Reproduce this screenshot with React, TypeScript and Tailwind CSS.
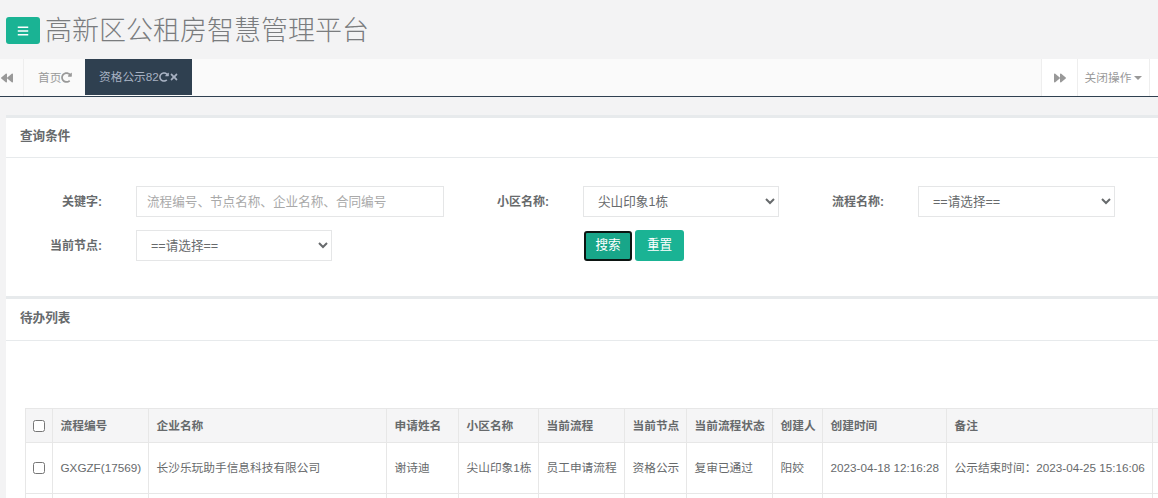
import { FaBackward, FaForward, FaBars, FaRedoAlt, FaTimes } from "react-icons/fa";

const font = { fontFamily: '"Liberation Sans", "Noto Sans CJK SC", sans-serif' };

const cols = [27, 96, 238, 72, 80, 86, 62, 86, 50, 124, 206, 60];

const heads = ["流程编号", "企业名称", "申请姓名", "小区名称", "当前流程", "当前节点", "当前流程状态", "创建人", "创建时间", "备注", ""];
const cells = ["GXGZF(17569)", "长沙乐玩助手信息科技有限公司", "谢诗迪", "尖山印象1栋", "员工申请流程", "资格公示", "复审已通过", "阳姣", "2023-04-18 12:16:28", "公示结束时间：2023-04-25 15:16:06", ""];

function Label({ children }: { children: string }) {
  return <label className="w-[96px] shrink-0 text-right text-[12px] font-bold text-[#676a6c]">{children}</label>;
}

function Select({ value, w }: { value: string; w: string }) {
  return (
    <select
      defaultValue={value}
      className={`${w} ml-[34px] h-[31px] border border-[#e5e6e7] bg-white pl-[10px] pr-[8px] text-[12.6px] text-[#676a6c] appearance-auto`}
    >
      <option>{value}</option>
    </select>
  );
}

export default function App() {
  return (
    <div className="h-[498px] w-[1158px] overflow-hidden bg-[#f3f3f4] text-[11.7px] text-[#676a6c]" style={font}>
      <header className="flex h-[59px] items-center pl-[6px] pt-[2px]">
        <button className="flex h-[27px] w-[34px] items-center justify-center rounded-[3px] bg-[#1ab394] text-white">
          <FaBars className="h-[12px] w-[12px]" />
        </button>
        <h1 className="ml-[5px] text-[27px] font-light leading-[30px] text-[#7a7c7e]">高新区公租房智慧管理平台</h1>
      </header>

      <nav className="flex h-[38px] border-b border-[#2f4050] bg-[#fafafa]">
        <div className="flex w-[24px] items-center border-r border-[#eeeeee] pl-[1px] text-[#999999]">
          <FaBackward className="h-[12px] w-[12px]" />
        </div>
        <div className="flex w-[61px] items-center pl-[14px] text-[11.7px] text-[#999999]">
          首页<FaRedoAlt className="h-[11px] w-[11px]" />
        </div>
        <div className="flex h-[36px] w-[107px] items-center bg-[#2f4050] pl-[14px] text-[11.7px] text-[#a7b1c2]">
          资格公示82<FaRedoAlt className="h-[10px] w-[10px]" /><FaTimes className="h-[10px] w-[10px]" />
        </div>
        <div className="flex-1" />
        <div className="flex w-[36px] items-center justify-center border-l border-[#eeeeee] bg-white text-[#999999]">
          <FaForward className="h-[12px] w-[12px]" />
        </div>
        <div className="flex w-[73px] items-center justify-center gap-[3px] border-l border-r border-[#eeeeee] bg-white text-[11.7px] text-[#999999]">
          关闭操作
          <span className="mt-[1px] h-0 w-0 border-x-[4px] border-t-[4px] border-x-transparent border-t-[#999999]" />
        </div>
        <div className="w-[8px] bg-white" />
      </nav>

      <main className="ml-[6px] mt-[18px] bg-white">
        <section className="border-t-[3px] border-[#e7eaec]">
          <div className="flex h-[40px] items-center border-b border-[#e7eaec] pb-[2px] pl-[14px] text-[12.6px] font-bold">查询条件</div>
          <div className="h-[138px] pt-[28px]">
            <div className="grid grid-cols-[447px_335px_1fr] gap-y-[13px]">
              <div className="flex items-center">
                <Label>关键字:</Label>
                <input
                  placeholder="流程编号、节点名称、企业名称、合同编号"
                  className="ml-[34px] h-[31px] w-[308px] border border-[#e5e6e7] bg-white px-[10px] text-[12.6px] outline-none placeholder:text-[#a9a9a9]"
                />
              </div>
              <div className="flex items-center">
                <Label>小区名称:</Label>
                <Select value="尖山印象1栋" w="w-[196px]" />
              </div>
              <div className="flex items-center">
                <Label>流程名称:</Label>
                <Select value="==请选择==" w="w-[197px]" />
              </div>
              <div className="flex items-center">
                <Label>当前节点:</Label>
                <Select value="==请选择==" w="w-[196px]" />
              </div>
              <div className="flex items-center pl-[131px]">
                <button className="h-[30px] w-[48px] rounded-[3px] border-2 border-[#0c1512] bg-[#18a689] text-[12.6px] text-white">搜索</button>
                <button className="ml-[3px] h-[31px] w-[49px] rounded-[3px] bg-[#1ab394] text-[12.6px] text-white">重置</button>
              </div>
            </div>
          </div>
        </section>

        <section className="border-t-[3px] border-[#e7eaec]">
          <div className="flex h-[42px] items-center border-b border-[#e7eaec] pb-[2px] pl-[14px] text-[12.6px] font-bold">待办列表</div>
          <div className="pl-[19px] pt-[67px]">
            <table className="w-[1187px] table-fixed border-collapse border border-[#e7e7e7]">
              <colgroup>
                {cols.map((c, i) => (
                  <col key={i} style={{ width: c }} />
                ))}
              </colgroup>
              <thead>
                <tr className="h-[34px] bg-[#f5f5f6]">
                  <th className="border border-[#e7e7e7] text-center align-middle">
                    <input type="checkbox" className="mx-auto block h-[12px] w-[12px]" />
                  </th>
                  {heads.map((h, i) => (
                    <th key={i} className="whitespace-nowrap border border-[#e7e7e7] pl-[7.5px] pr-[8px] text-left text-[11.7px] font-bold">{h}</th>
                  ))}
                </tr>
              </thead>
              <tbody>
                <tr className="h-[51px]">
                  <td className="border border-[#e7e7e7] text-center align-middle">
                    <input type="checkbox" className="mx-auto block h-[12px] w-[12px]" />
                  </td>
                  {cells.map((c, i) => (
                    <td key={i} className="whitespace-nowrap border border-[#e7e7e7] pl-[7.5px] pr-[8px] text-[11.7px]">{c}</td>
                  ))}
                </tr>
                <tr className="h-[30px]">
                  {cols.map((_, i) => (
                    <td key={i} className="border border-[#e7e7e7]" />
                  ))}
                </tr>
              </tbody>
            </table>
          </div>
        </section>
      </main>
    </div>
  );
}
